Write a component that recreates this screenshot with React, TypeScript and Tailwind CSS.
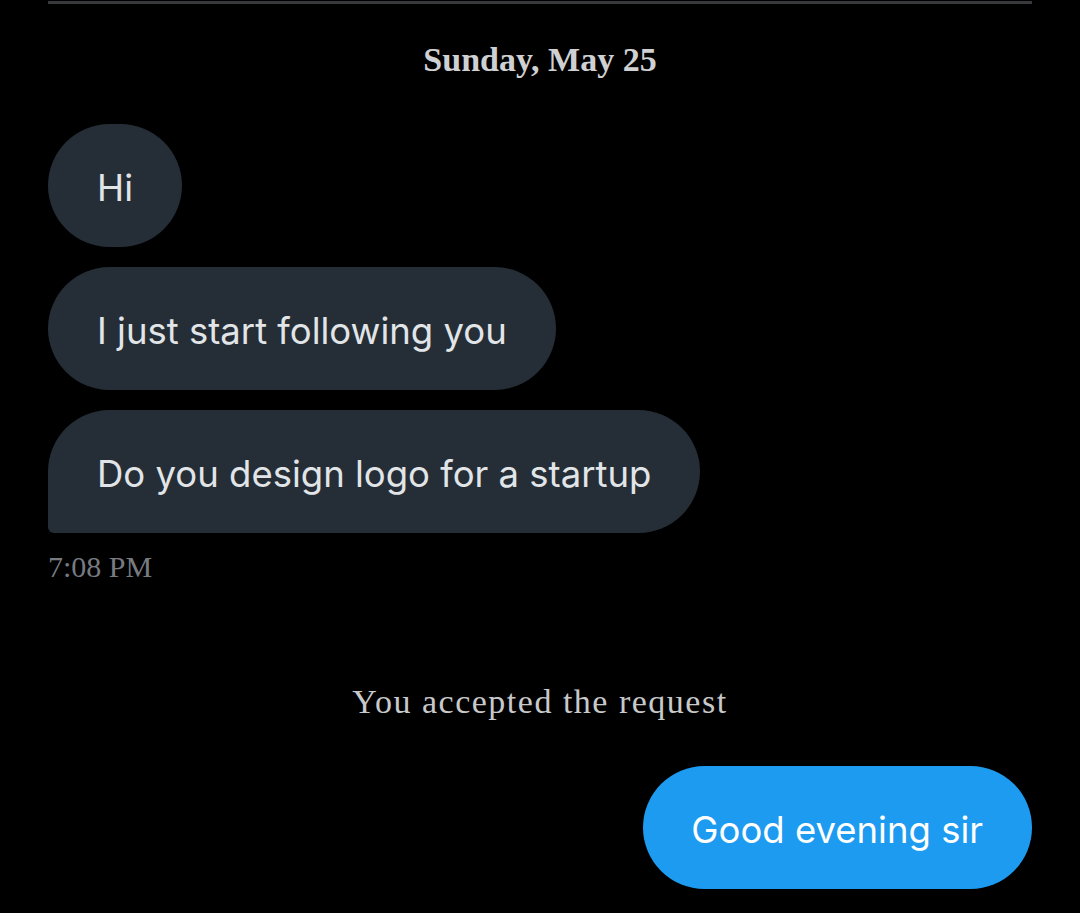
export default function App() {
  return (
    <div className="w-[1080px] h-[913px] overflow-hidden bg-black px-[48px]">
      <div className="mt-[1px] h-[3px] bg-[#38393d]" />
      <div className="mt-[34px] text-center text-[34px] font-bold leading-[44px] text-[#cfd0d2] [font-family:'Liberation_Serif',serif]">
        Sunday, May 25
      </div>
      <div className="mt-[42px] flex flex-col items-start gap-[20px] [font-family:Inter,'Noto_Sans',sans-serif]">
        <div className="flex h-[123px] items-center rounded-full bg-[#252e36] px-[49px] pt-[6px] text-[36.5px] text-[#e2e5e8]">Hi</div>
        <div className="flex h-[123px] items-center rounded-full bg-[#252e36] px-[49px] pt-[6px] text-[36.5px] text-[#e2e5e8]">I just start following you</div>
        <div className="flex h-[123px] items-center rounded-[62px] rounded-bl-[6px] bg-[#252e36] px-[49px] pt-[6px] text-[36.5px] text-[#e2e5e8]">Do you design logo for a startup</div>
      </div>
      <div className="mt-[14px] text-[30px] leading-[40px] text-[#777b80] [font-family:'Liberation_Serif',serif]">7:08 PM</div>
      <div className="mt-[93px] text-center text-[34px] leading-[44px] tracking-[1.5px] text-[#c8c9cb] [font-family:'Liberation_Serif',serif]">
        You accepted the request
      </div>
      <div className="mt-[42px] flex flex-col items-end [font-family:Inter,'Noto_Sans',sans-serif]">
        <div className="flex h-[123px] items-center rounded-full bg-[#1d9bf0] pl-[48px] pr-[49px] pt-[6px] text-[36.5px] text-white">Good evening sir</div>
        <div className="mt-[19px] mr-[60px] text-[28px] leading-[36px] text-[#777b80] [font-family:'Liberation_Serif',serif]">7:09 PM · Sent</div>
      </div>
    </div>
  );
}
